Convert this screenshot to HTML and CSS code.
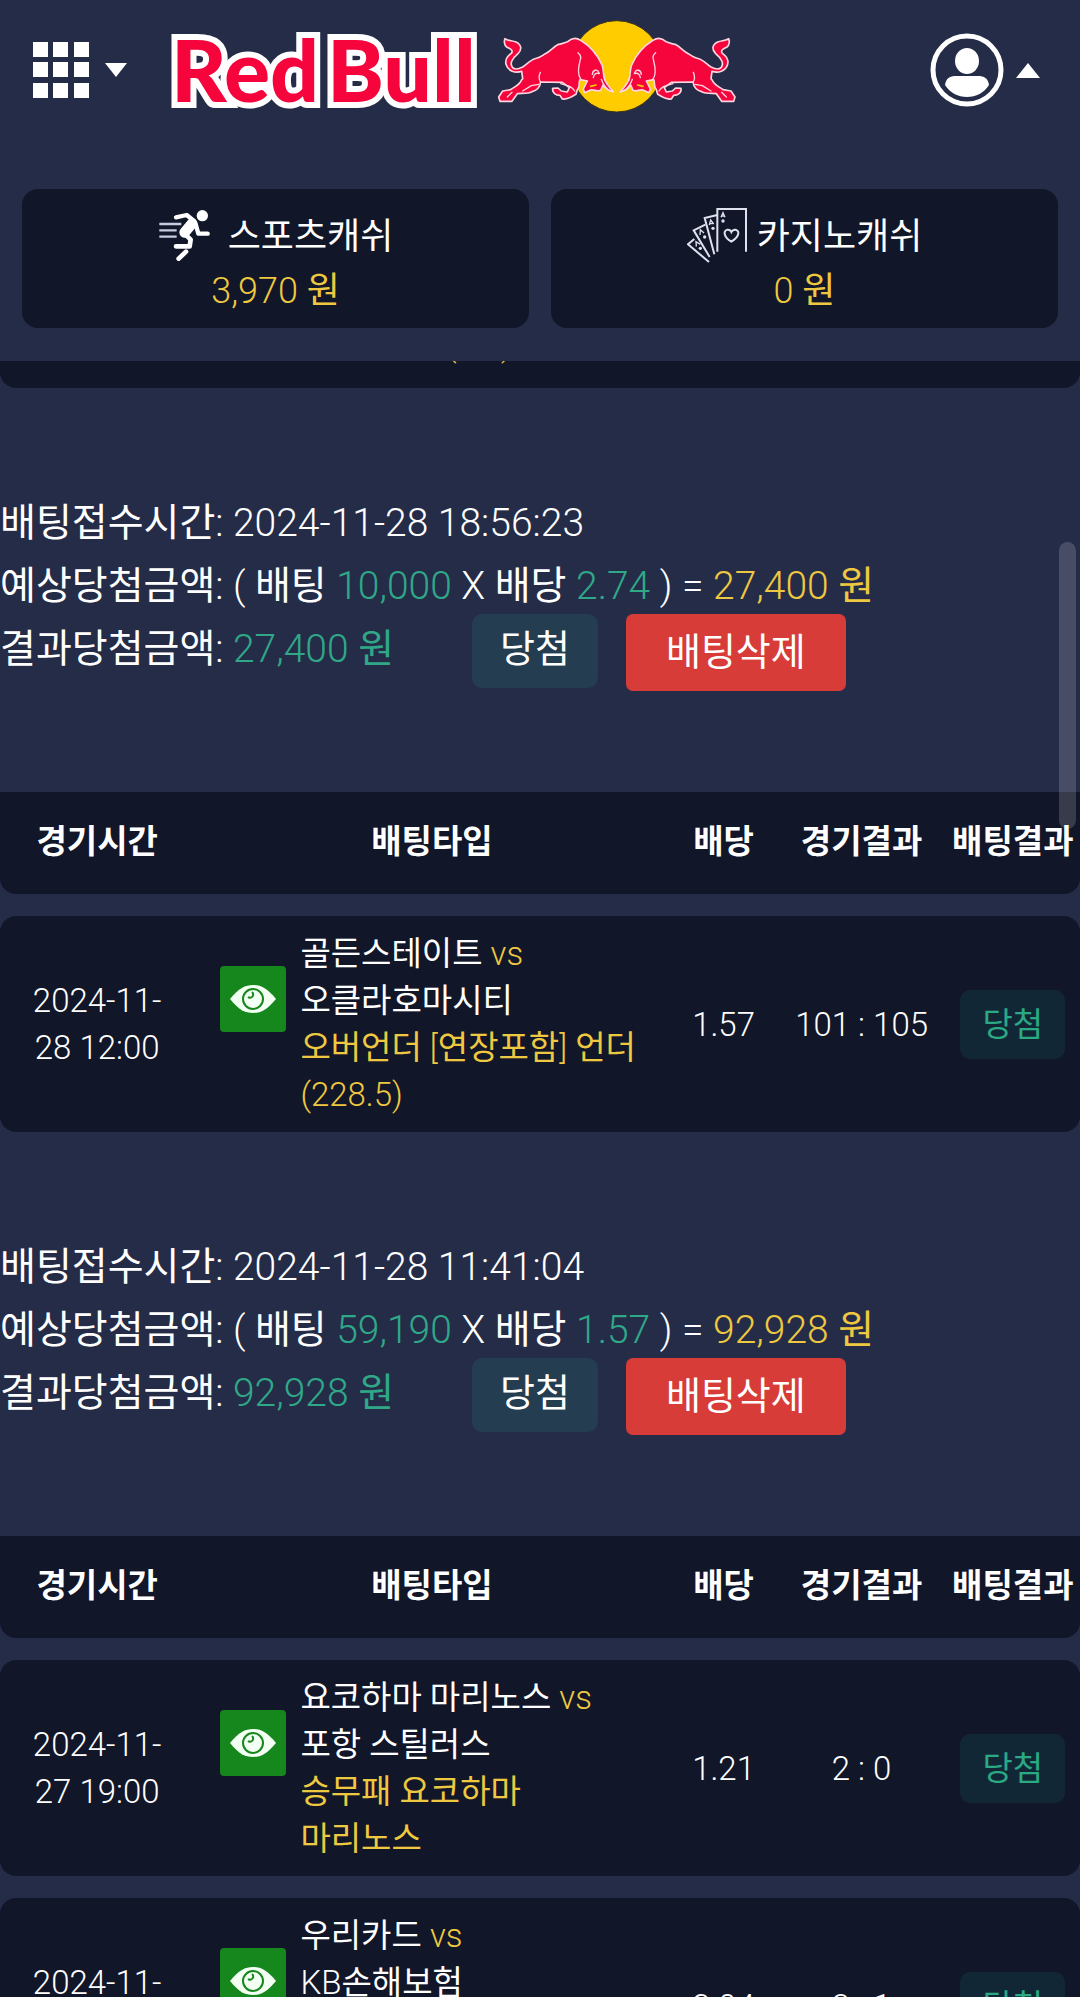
FILE: index.html
```html
<!DOCTYPE html>
<html lang="ko">
<head>
    <meta charset="UTF-8">
    <meta name="viewport" content="width=device-width, initial-scale=1.0">
    <title>배팅내역</title>
    <link rel="stylesheet" href="styles.css">
</head>
<body>
    <svg class="defs" width="0" height="0" aria-hidden="true">
        <symbol id="eye" viewBox="0 0 48 30">
            <path d="M1 15 C10 4 16 1 24 1 S38 4 47 15 C38 26 32 29 24 29 S10 26 1 15z" fill="#f4fff4"/>
            <circle cx="24" cy="15" r="10" fill="none" stroke="#15871c" stroke-width="2"/>
            <path d="M23 8 a3 3 0 0 1 -4 5" fill="none" stroke="#15871c" stroke-width="2"/>
        </symbol>
    </svg>

    <header class="header">
        <div class="topbar">
            <button class="menu-btn" aria-label="메뉴">
                <svg width="56" height="56" viewBox="0 0 56 56" fill="#fff">
                    <path d="M0 0h15v15H0zM20 0h15v15H20zM41 0h15v15H41zM0 20h15v15H0zM20 20h15v15H20zM41 20h15v15H41zM0 41h15v15H0zM20 41h15v15H20zM41 41h15v15H41z"/>
                </svg>
                <svg width="22" height="14" viewBox="0 0 22 14" fill="#fff"><path d="M0 0h22L11 14z"/></svg>
            </button>
            <a class="logo" href="#" aria-label="Red Bull">
                <svg class="logo-name" width="308" height="110" viewBox="0 0 308 110">
                    <text class="logo-text" x="6" y="91">Red</text>
                    <text class="logo-text" x="162" y="91">Bull</text>
                </svg>
                <svg width="260" height="110" viewBox="0 0 780 330">
                    <circle cx="380" cy="166" r="137" fill="#ffcc00" stroke="#3a3420" stroke-width="3"/>
                    <g id="bull" stroke-linejoin="round" stroke-linecap="round">
                        <path d="M45 83 C52 90 68 88 78 93 C98 103 94 118 84 128 C66 143 58 158 68 170 C76 178 88 173 98 168 C112 158 122 148 132 144 C146 142 155 136 166 128 C180 122 190 108 203 101 C216 99 224 95 233 92 C246 80 260 80 272 88 C300 105 322 130 336 162 C343 178 338 196 346 210 C352 223 362 232 370 243 C356 240 346 233 339 222 L332 238 C322 243 312 235 302 237 L284 245 L280 234 L292 210 L270 206 C264 216 272 228 262 236 L258 250 C246 256 234 266 217 264 L210 253 C198 253 186 246 188 232 L204 231 L214 240 L232 243 L238 230 L217 214 L152 213 C150 228 142 238 126 242 C112 249 92 246 82 248 L66 271 L30 271 L26 258 L38 240 L62 236 C76 226 88 222 94 208 L98 203 L95 181 C76 187 54 181 48 160 C44 142 56 133 65 126 C70 116 60 114 50 108 C42 102 42 90 45 83z" fill="#f5053c" stroke="#ffd5e0" stroke-width="5"/>
                        <path d="M264 125 C273 132 273 142 270 148 M270 150 C264 172 262 190 272 204 M307 190 C308 178 322 170 328 188 C316 184 312 190 310 200 M151 184 C146 196 146 206 152 214 M334 205 C340 222 352 236 362 240 M52 258 L66 244 M98 240 L124 224 L146 220 M212 218 C230 224 246 224 254 240" fill="none" stroke="#ffd5e0" stroke-width="4"/>
                        <path d="M302 226 L318 222" fill="none" stroke="#ffcc00" stroke-width="5"/>
                    </g>
                    <use href="#bull" transform="matrix(-1 0 0 1 761 0)"/>
                </svg>
            </a>
            <button class="user-btn" aria-label="내 정보">
                <svg width="74" height="74" viewBox="0 0 74 74" fill="#fff">
                    <circle cx="37" cy="37" r="34" fill="none" stroke="#fff" stroke-width="5"/>
                    <ellipse cx="37" cy="28" rx="12" ry="13"/>
                    <path d="M15 52 C16 45 20 43 26 43 H48 C54 43 58 45 59 52 C54 60 46 64 37 64 S20 60 15 52z"/>
                </svg>
                <svg width="24" height="15" viewBox="0 0 24 15" fill="#fff"><path d="M0 15h24L12 0z"/></svg>
            </button>
        </div>
        <div class="cash-list">
            <div class="cash-card">
                <div class="cash-title sports">
                    <svg width="52" height="52" viewBox="0 0 156 156" fill="none" stroke="#fff" stroke-linecap="round" stroke-linejoin="round">
                        <path d="M4 45h66M4 64h52M4 83h52" stroke="#c8cbe0" stroke-width="7" stroke-linecap="butt"/>
                        <circle cx="133" cy="20" r="17" fill="#fff" stroke="none"/>
                        <path d="M54 25 L86 18 L108 36" stroke-width="13"/>
                        <path d="M102 44 L80 70" stroke-width="32"/>
                        <path d="M112 42 L121 74 H149" stroke-width="13"/>
                        <path d="M82 76 L98 92 L95 112 H54" stroke-width="14"/>
                        <path d="M84 128 L62 149" stroke-width="14"/>
                    </svg>
                    <span>스포츠캐쉬</span>
                </div>
                <div class="cash-money">3,970 원</div>
            </div>
            <div class="cash-card">
                <div class="cash-title casino">
                    <svg width="60" height="56" viewBox="0 0 180 168" fill="none" stroke="#dfe1ee" stroke-width="6">
                        <path d="M91 134V6h86v128"/>
                        <path d="M91 24 L53 33 L82 142"/>
                        <path d="M55 53 L20 70 L68 150"/>
                        <path d="M22 96 L3 112 L66 165"/>
                        <path d="M133 104 C110 90 108 72 121 68 Q130 67 133 75 Q137 67 146 68 C160 72 156 90 133 104z"/>
                        <path d="M102 31l6-14l6 14M104 27h8M67 54l4-15l9 12M68 50h9M39 84l1-16l11 10M28 119l-1-15l13 8" stroke-width="4"/>
                        <g fill="#dfe1ee" stroke="none">
                            <circle cx="108" cy="42" r="5"/><circle cx="78" cy="64" r="5"/><circle cx="53" cy="90" r="5"/><circle cx="40" cy="124" r="5"/>
                        </g>
                    </svg>
                    <span>카지노캐쉬</span>
                </div>
                <div class="cash-money">0 원</div>
            </div>
        </div>
    </header>

    <main class="content">
        <table class="bet-table scrolled">
            <tbody>
                <tr>
                    <td class="col-time"></td>
                    <td class="col-type"><p class="pick">핸디캡 LA (1.5)</p></td>
                    <td class="col-rate"></td>
                    <td class="col-score"></td>
                    <td class="col-result"></td>
                </tr>
            </tbody>
        </table>

        <section class="bet-info">
            <p>배팅접수시간: 2024-11-28 18:56:23</p>
            <p>예상당첨금액: ( 배팅 <span class="green">10,000</span> X 배당 <span class="green">2.74</span> ) = <span class="yellow">27,400 원</span></p>
            <div class="bet-result">
                <p>결과당첨금액: <span class="green">27,400 원</span></p>
                <span class="badge-win">당첨</span>
                <button class="delete-btn">배팅삭제</button>
            </div>
        </section>

        <table class="bet-table">
            <thead>
                <tr>
                    <th class="col-time">경기시간</th>
                    <th class="col-type">배팅타입</th>
                    <th class="col-rate">배당</th>
                    <th class="col-score">경기결과</th>
                    <th class="col-result">배팅결과</th>
                </tr>
            </thead>
            <tbody>
                <tr>
                    <td class="col-time">2024-11-28 12:00</td>
                    <td>
                        <div class="match">
                            <button class="eye-btn" aria-label="보기"><svg width="48" height="30"><use href="#eye"/></svg></button>
                            <p>골든스테이트 <span class="vs">vs</span><br>오클라호마시티<br><span class="pick">오버언더 [연장포함] 언더 (228.5)</span></p>
                        </div>
                    </td>
                    <td>1.57</td>
                    <td>101 : 105</td>
                    <td><span class="tag-win">당첨</span></td>
                </tr>
            </tbody>
        </table>

        <section class="bet-info">
            <p>배팅접수시간: 2024-11-28 11:41:04</p>
            <p>예상당첨금액: ( 배팅 <span class="green">59,190</span> X 배당 <span class="green">1.57</span> ) = <span class="yellow">92,928 원</span></p>
            <div class="bet-result">
                <p>결과당첨금액: <span class="green">92,928 원</span></p>
                <span class="badge-win">당첨</span>
                <button class="delete-btn">배팅삭제</button>
            </div>
        </section>

        <table class="bet-table">
            <thead>
                <tr>
                    <th class="col-time">경기시간</th>
                    <th class="col-type">배팅타입</th>
                    <th class="col-rate">배당</th>
                    <th class="col-score">경기결과</th>
                    <th class="col-result">배팅결과</th>
                </tr>
            </thead>
            <tbody>
                <tr>
                    <td class="col-time">2024-11-27 19:00</td>
                    <td>
                        <div class="match">
                            <button class="eye-btn" aria-label="보기"><svg width="48" height="30"><use href="#eye"/></svg></button>
                            <p>요코하마 마리노스 <span class="vs">vs</span><br>포항 스틸러스<br><span class="pick">승무패 요코하마 마리노스</span></p>
                        </div>
                    </td>
                    <td>1.21</td>
                    <td>2 : 0</td>
                    <td><span class="tag-win">당첨</span></td>
                </tr>
                <tr>
                    <td class="col-time">2024-11-27 19:00</td>
                    <td>
                        <div class="match">
                            <button class="eye-btn" aria-label="보기"><svg width="48" height="30"><use href="#eye"/></svg></button>
                            <p>우리카드 <span class="vs">vs</span><br>KB손해보험<br><span class="pick">승무패<br>우리카드</span></p>
                        </div>
                    </td>
                    <td>2.04</td>
                    <td>3 : 1</td>
                    <td><span class="tag-win">당첨</span></td>
                </tr>
            </tbody>
        </table>
    </main>
    <div class="scrollbar"></div>
</body>
</html>
```
FILE: styles.css
```css
* {
    box-sizing: border-box;
    margin: 0;
    padding: 0;
}
body {
    height: 100vh;
    display: flex;
    flex-direction: column;
    overflow: hidden;
    background-color: #252c48;
    color: #fff;
    font-family: "Roboto Light", Roboto, "Noto Sans CJK KR", sans-serif;
    font-weight: 400;
    word-break: keep-all;
}
button {
    border: none;
    background: none;
    color: #fff;
    font: inherit;
    cursor: pointer;
}
svg {
    display: block;
    flex: none;
}
.defs {
    position: absolute;
}

/* header */
.header {
    flex: none;
    padding: 0 22px 33px;
    background-color: #252c48;
    position: relative;
    z-index: 1;
}
.topbar {
    display: flex;
    align-items: center;
    height: 140px;
    margin-bottom: 49px;
    padding: 0 18px 0 11px;
}
.menu-btn, .user-btn {
    display: flex;
    align-items: center;
}
.menu-btn {
    gap: 16px;
}
.user-btn {
    gap: 12px;
    margin-left: auto;
}
.logo {
    display: flex;
    align-items: center;
    gap: 17px;
    margin-left: 38px;
    margin-bottom: 8px;
}
.logo-name {
    overflow: visible;
}
.logo-text {
    font-family: Lato, sans-serif;
    font-size: 86px;
    font-weight: 900;
    fill: #f5053c;
    stroke: #fff;
    stroke-width: 12px;
    paint-order: stroke;
}
.cash-list {
    display: flex;
    gap: 22px;
}
.cash-card {
    flex: 1;
    padding: 18px 0 9px;
    border-radius: 16px;
    background-color: #111628;
    font-size: 36px;
    line-height: 56px;
    text-align: center;
}
.cash-title {
    display: flex;
    align-items: center;
    justify-content: center;
    height: 56px;
}
.cash-title span {
    padding-top: 4px;
}
.sports {
    gap: 18px;
}
.casino {
    gap: 10px;
}
.cash-money, .yellow, .pick, .vs {
    color: #eec840;
}

/* bet list */
.content {
    flex: 1;
    min-height: 0;
    overflow: hidden;
}
.bet-info {
    padding: 104px 0 100px;
    font-size: 39px;
    line-height: 63px;
}
.bet-result {
    display: flex;
    align-items: flex-start;
    height: 74px;
}
.green {
    color: #2fa888;
}
.badge-win, .delete-btn {
    margin-top: -4px;
    font-size: 38px;
}
.badge-win {
    margin-left: 78px;
    padding: 0 28px 4px;
    border-radius: 10px;
    background-color: #243d50;
    line-height: 70px;
}
.delete-btn {
    height: 77px;
    margin-left: 28px;
    padding: 0 40px;
    border-radius: 7px;
    background-color: #d73c38;
}
.bet-table {
    width: 100%;
    margin: -22px 0;
    table-layout: fixed;
    border-collapse: separate;
    border-spacing: 0 22px;
    font-size: 33px;
    line-height: 47px;
    text-align: center;
}
.bet-table th, .bet-table td {
    background-color: #111628;
}
.bet-table th {
    height: 102px;
    padding-bottom: 4px;
    font-weight: 700;
    white-space: nowrap;
}
.bet-table td {
    height: 216px;
}
.bet-table th:first-child {
    border-bottom-left-radius: 16px;
}
.bet-table th:last-child {
    border-bottom-right-radius: 16px;
}
.bet-table td:first-child {
    border-radius: 16px 0 0 16px;
}
.bet-table td:last-child {
    border-radius: 0 16px 16px 0;
}
.bet-table th:nth-child(n+4), .bet-table td:nth-child(n+4) {
    padding-left: 6px;
}
/* row that is scrolled up under the header */
.scrolled {
    margin-top: -211px;
}
.scrolled td {
    padding: 0 0 20px 106px;
    text-align: left;
    vertical-align: bottom;
}
.col-time {
    width: 18%;
    padding: 0 24px;
}
.col-type {
    width: 44%;
}
.col-rate {
    width: 10%;
}
.col-score {
    width: 15%;
}
.col-result {
    width: 13%;
}
.match {
    display: flex;
    align-items: flex-start;
    gap: 14px;
    padding: 0 28px 0 26px;
    text-align: left;
}
.eye-btn {
    flex: none;
    display: flex;
    align-items: center;
    justify-content: center;
    width: 66px;
    height: 66px;
    margin-top: 36px;
    border-radius: 4px;
    background-color: #15871c;
}
.tag-win {
    display: inline-block;
    padding: 0 22px;
    border-radius: 10px;
    background-color: #122736;
    color: #2ba884;
    line-height: 69px;
}

.scrollbar {
    position: fixed;
    top: 542px;
    right: 4px;
    width: 17px;
    height: 287px;
    border-radius: 9px;
    background-color: rgba(255, 255, 255, 0.16);
    z-index: 2;
}
```
